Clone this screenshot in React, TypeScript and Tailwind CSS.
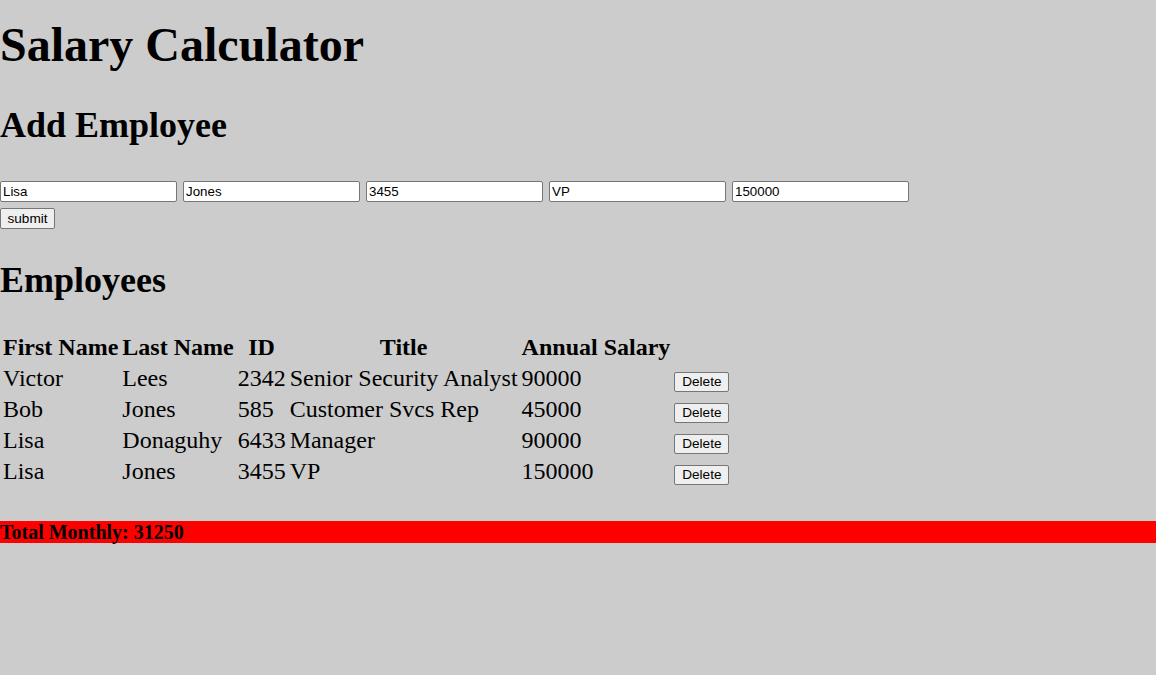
import React from "react";

const employees = [
  { first: "Victor", last: "Lees", id: "2342", title: "Senior Security Analyst", salary: "90000" },
  { first: "Bob", last: "Jones", id: "585", title: "Customer Svcs Rep", salary: "45000" },
  { first: "Lisa", last: "Donaguhy", id: "6433", title: "Manager", salary: "90000" },
  { first: "Lisa", last: "Jones", id: "3455", title: "VP", salary: "150000" },
];

const inputs = ["Lisa", "Jones", "3455", "VP", "150000"];

export default function App() {
  return (
    <div className="min-h-screen bg-[#cccccc] text-black font-['Liberation_Serif','Times_New_Roman',serif] leading-[normal] flow-root">
      <h1 className="mt-[17px] text-[48px] font-bold leading-[normal]">Salary Calculator</h1>
      <h2 className="mt-[32px] text-[36px] font-bold leading-[normal]">Add Employee</h2>
      <div className="mt-[35px] flex gap-[6px]">
        {inputs.map((v, i) => (
          <input
            key={i}
            readOnly
            value={v}
            className="w-[177px] h-[21px] border border-[#767676] rounded-[2px] bg-white px-[2px] text-[13.33px] leading-[normal] text-black font-['Liberation_Sans',Arial,sans-serif] outline-none"
          />
        ))}
      </div>
      <div className="mt-[6px]">
        <button className="w-[55px] h-[21px] text-center border border-[#767676] rounded-[2px] bg-[#efefef] text-[13.6px] leading-[normal] text-black font-['Liberation_Sans',Arial,sans-serif]">
          submit
        </button>
      </div>
      <h2 className="mt-[30px] text-[36px] font-bold leading-[normal]">Employees</h2>
      <table className="mt-[30px] border-separate border-spacing-[2px] text-[24px] leading-[normal]">
        <thead>
          <tr>
            <th className="p-[1px] font-bold text-center">First Name</th>
            <th className="p-[1px] font-bold text-center">Last Name</th>
            <th className="p-[1px] font-bold text-center">ID</th>
            <th className="p-[1px] font-bold text-center">Title</th>
            <th className="p-[1px] font-bold text-center">Annual Salary</th>
            <th className="p-[1px]"></th>
          </tr>
        </thead>
        <tbody>
          {employees.map((e, i) => (
            <tr key={i}>
              <td className="p-[1px] align-middle">{e.first}</td>
              <td className="p-[1px] align-middle">{e.last}</td>
              <td className="p-[1px] align-middle">{e.id}</td>
              <td className="p-[1px] align-middle">{e.title}</td>
              <td className="p-[1px] align-middle">{e.salary}</td>
              <td className="p-[1px] align-middle">
                <button className="w-[55px] h-[20px] text-center border border-[#767676] rounded-[2px] bg-[#efefef] text-[13.6px] leading-[normal] text-black font-['Liberation_Sans',Arial,sans-serif]">
                  Delete
                </button>
              </td>
            </tr>
          ))}
        </tbody>
      </table>
      <h5 className="mt-[33px] h-[22px] bg-[#ff0000] text-[20px] font-bold leading-[22px]">Total Monthly: 31250</h5>
    </div>
  );
}
